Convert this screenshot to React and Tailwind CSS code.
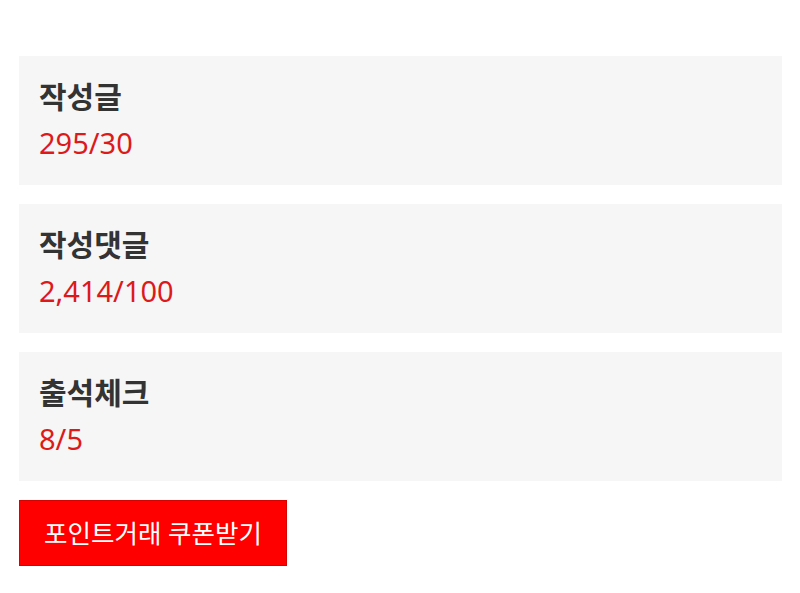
import React from "react";

const items = [
  { label: "작성글", value: "295/30" },
  { label: "작성댓글", value: "2,414/100" },
  { label: "출석체크", value: "8/5" },
];

export default function App() {
  return (
    <div
      className="bg-white min-h-[593px] px-[19px] pt-[56px] pr-[18px]"
      style={{ fontFamily: '"Noto Sans", "Noto Sans CJK KR", sans-serif' }}
    >
      <div className="flex flex-col gap-[19px]">
        {items.map((item) => (
          <div key={item.label} className="bg-[#f6f6f6] h-[129px] px-[20px] pt-[20px]">
            <div className="text-[30px] leading-[42px] font-bold text-[#333]">{item.label}</div>
            <div className="text-[29px] leading-[50px] text-[#dd1a1a]">{item.value}</div>
          </div>
        ))}
      </div>
      <button className="mt-[19px] w-[268px] h-[66px] bg-[#ff0000] border border-[#d90000] text-white text-[25.5px]">
        포인트거래 쿠폰받기
      </button>
    </div>
  );
}
